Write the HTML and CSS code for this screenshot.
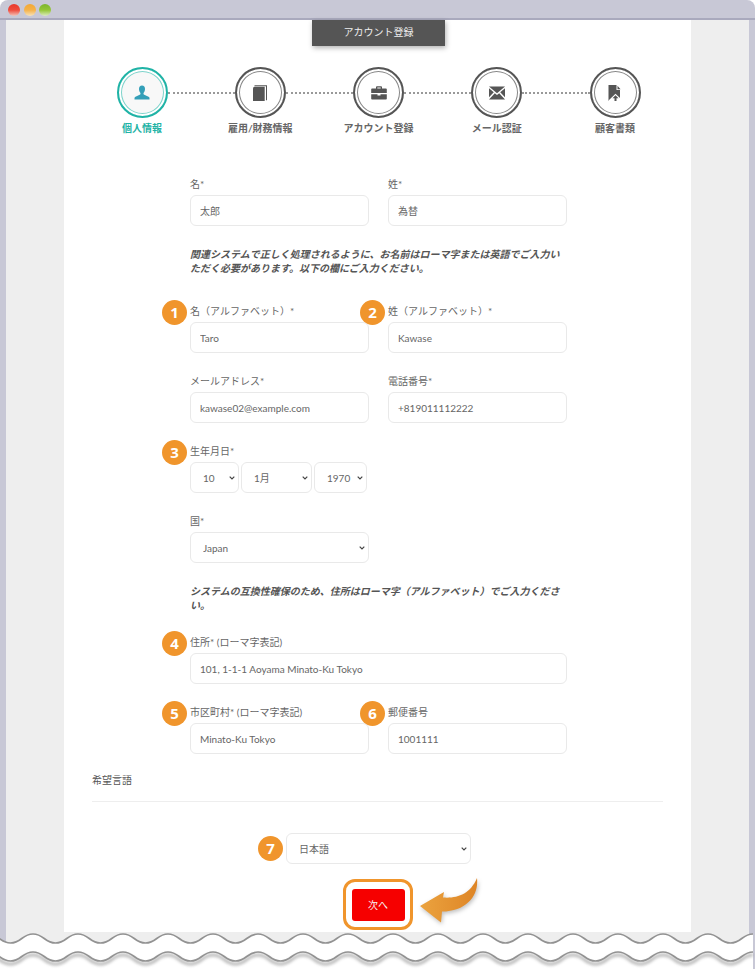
FILE: index.html
```html
<!DOCTYPE html>
<html lang="ja">
<head>
<meta charset="utf-8">
<title>アカウント登録</title>
<link rel="stylesheet" href="styles.css">
</head>
<body>
<div class="window">
  <div class="titlebar">
    <span class="light red"></span><span class="light orange"></span><span class="light green"></span>
  </div>
  <div class="content">
    <main class="page">
      <div class="tab">アカウント登録</div>
      <ol class="steps">
        <li class="step active">
          <span class="circle"><svg viewBox="0 0 16 16" class="icon"><path d="M8 .5c2 0 3 1.500 3 3.500 0 1.500-.6 3-1.300 3.800-.3.400-.3 1.400.1 1.700l4.700 2.300c.6.300 1 .7 1 1.500v1.200H.5v-1.200c0-.8.400-1.200 1-1.500l4.700-2.300c.4-.3.400-1.300.1-1.700C5.600 7 5 5.500 5 4c0-2 1-3.500 3-3.500z"/></svg></span>
          <span class="step-label">個人情報</span>
        </li>
        <li class="line"></li>
        <li class="step">
          <span class="circle"><svg viewBox="0 0 16 16" class="icon"><path d="M2.500.3H15v15h-1V1.300H2.500z"/><path d="M1 3.300q0-1.500 1.500-1.500h10.200V16H1z"/></svg></span>
          <span class="step-label">雇用/財務情報</span>
        </li>
        <li class="line"></li>
        <li class="step">
          <span class="circle"><svg viewBox="0 0 16 16" class="icon"><path d="M5 3.500V2c0-.5.4-.8 1-.8h4c.6 0 1 .3 1 .8v1.500h4c.5 0 .8.300.8.800V8H.2V4.300c0-.5.3-.8.800-.8zm1.300 0h3.400v-1H6.300z"/><path d="M.2 9.200h6.300v1.300h3V9.200h6.300v4.500c0 .5-.3.800-.8.800H1c-.5 0-.8-.3-.8-.8z"/></svg></span>
          <span class="step-label">アカウント登録</span>
        </li>
        <li class="line"></li>
        <li class="step">
          <span class="circle"><svg viewBox="0 0 16 16" class="icon"><path d="M0 1.500h16L8 8.300z"/><path d="M0 3.200 4.800 7.300 0 12.300zM16 3.200 11.200 7.300 16 12.300zM5.800 8.200 8 10l2.200-1.800 5.800 6.300H0z"/></svg></span>
          <span class="step-label">メール認証</span>
        </li>
        <li class="line"></li>
        <li class="step">
          <span class="circle"><svg viewBox="0 0 16 16" class="icon"><path d="M1.500 0h8v5H13v11H1.500z"/><path d="M10.500.8 13.500 4.200h-3z"/><path class="cut" d="M1.500 15.500 8.500 8.800 13 13v3H1.500z"/><path d="M8.500 10.300l3 3h-2V16h-2v-2.700h-2z"/></svg></span>
          <span class="step-label">顧客書類</span>
        </li>
      </ol>

      <form class="form">
        <div class="row">
          <div class="field"><label>名*</label><input type="text" value="太郎"></div>
          <div class="field"><label>姓*</label><input type="text" value="為替"></div>
        </div>
        <p class="note">関連システムで正しく処理されるように、お名前はローマ字または英語でご入力いただく必要があります。以下の欄にご入力ください。</p>
        <div class="row">
          <div class="field"><span class="badge">1</span><label>名（アルファベット）*</label><input type="text" value="Taro"></div>
          <div class="field"><span class="badge">2</span><label>姓（アルファベット）*</label><input type="text" value="Kawase"></div>
        </div>
        <div class="row">
          <div class="field"><label>メールアドレス*</label><input type="text" value="kawase02@example.com"></div>
          <div class="field"><label>電話番号*</label><input type="text" value="+819011112222"></div>
        </div>
        <div class="row">
          <div class="field"><span class="badge">3</span><label>生年月日*</label>
            <div class="dob">
              <select class="day"><option>10</option></select>
              <select class="month"><option>1月</option></select>
              <select class="year"><option>1970</option></select>
            </div>
          </div>
        </div>
        <div class="row">
          <div class="field half"><label>国*</label><select class="country"><option>Japan</option></select></div>
        </div>
        <p class="note tight">システムの互換性確保のため、住所はローマ字（アルファベット）でご入力ください。</p>
        <div class="row">
          <div class="field"><span class="badge">4</span><label>住所* (ローマ字表記)</label><input type="text" value="101, 1-1-1 Aoyama Minato-Ku Tokyo"></div>
        </div>
        <div class="row">
          <div class="field"><span class="badge">5</span><label>市区町村* (ローマ字表記)</label><input type="text" value="Minato-Ku Tokyo"></div>
          <div class="field"><span class="badge">6</span><label>郵便番号</label><input type="text" value="1001111"></div>
        </div>
      </form>

      <section class="language">
        <h2>希望言語</h2>
        <div class="lang-row">
          <span class="badge">7</span>
          <select class="lang"><option>日本語</option></select>
        </div>
        <div class="actions">
          <div class="highlight"><button type="button">次へ</button></div>
          <svg class="arrow" viewBox="0 0 60 50">
            <defs>
              <linearGradient id="ag" x1="0" y1="0" x2="1" y2="0"><stop offset="0" stop-color="#eba33f"/><stop offset="1" stop-color="#de8526"/></linearGradient>
            </defs>
            <path fill="url(#ag)" d="M2 31 26 17l-1 5.500c14 1 27-3 34-19.500 2 17-10 33-35 33.500l-1 11z"/>
          </svg>
        </div>
      </section>
    </main>
  </div>
</div>
<svg class="tear" viewBox="0 0 755 39">
  <defs>
    <filter id="blur" x="-5%" y="-100%" width="110%" height="300%"><feGaussianBlur stdDeviation="1.800"/></filter>
    <path id="wave" d="M-12 4c11 0 11.500 9 22.500 9s11.500-9 22.500-9c11 0 11.500 9 22.500 9s11.500-9 22.500-9c11 0 11.500 9 22.500 9s11.500-9 22.500-9c11 0 11.500 9 22.500 9s11.500-9 22.500-9c11 0 11.500 9 22.500 9s11.500-9 22.500-9c11 0 11.500 9 22.500 9s11.500-9 22.500-9c11 0 11.500 9 22.500 9s11.500-9 22.500-9c11 0 11.500 9 22.500 9s11.500-9 22.500-9c11 0 11.500 9 22.500 9s11.500-9 22.500-9c11 0 11.500 9 22.500 9s11.500-9 22.500-9c11 0 11.500 9 22.500 9s11.500-9 22.500-9c11 0 11.500 9 22.500 9s11.500-9 22.500-9c11 0 11.500 9 22.500 9s11.500-9 22.500-9c11 0 11.500 9 22.500 9s11.500-9 22.500-9c11 0 11.500 9 22.500 9s11.500-9 22.500-9c11 0 11.500 9 22.500 9s11.500-9 22.500-9c11 0 11.500 9 22.500 9s11.500-9 22.500-9"/>
  </defs>
  <path class="sheet" d="M-12 4c11 0 11.500 9 22.500 9s11.500-9 22.500-9c11 0 11.500 9 22.500 9s11.500-9 22.500-9c11 0 11.500 9 22.500 9s11.500-9 22.500-9c11 0 11.500 9 22.500 9s11.500-9 22.500-9c11 0 11.500 9 22.500 9s11.500-9 22.500-9c11 0 11.500 9 22.500 9s11.500-9 22.500-9c11 0 11.500 9 22.500 9s11.500-9 22.500-9c11 0 11.500 9 22.500 9s11.500-9 22.500-9c11 0 11.500 9 22.500 9s11.500-9 22.500-9c11 0 11.500 9 22.500 9s11.500-9 22.500-9c11 0 11.500 9 22.500 9s11.500-9 22.500-9c11 0 11.500 9 22.500 9s11.500-9 22.500-9c11 0 11.500 9 22.500 9s11.500-9 22.500-9c11 0 11.500 9 22.500 9s11.500-9 22.500-9c11 0 11.500 9 22.500 9s11.500-9 22.500-9c11 0 11.500 9 22.500 9s11.500-9 22.500-9c11 0 11.500 9 22.500 9s11.500-9 22.500-9V39H-12z"/>
  <use href="#wave" class="wave"/>
  <use href="#wave" class="wave shade" filter="url(#blur)" y="21"/>
  <use href="#wave" class="wave" y="18"/>
</svg>
</body>
</html>
```

FILE: styles.css
```css
* { box-sizing: border-box; }
html, body { margin: 0; height: 100%; background: #fff; }
body {
  position: relative;
  width: 755px;
  height: 969px;
  overflow: hidden;
  font-family: Lato, "Noto Sans CJK JP", sans-serif;
  font-size: 10px;
  color: #555;
}
.window {
  height: 969px;
  background: #c8c8d6;
  border-radius: 8px 8px 0 0;
  padding: 0 6px;
  display: flex;
  flex-direction: column;
}
.titlebar {
  height: 20px;
  flex: none;
  margin: 0 -6px;
  padding: 4px 0 0 8px;
  display: flex;
  gap: 3.600px;
  border-bottom: 2px solid #a9a9bd;
}
.light { width: 12px; height: 12px; border-radius: 50%; }
.red { background: linear-gradient(#e9372c 0, #ef4a3c 50%, #f3c4bb 100%); }
.orange { background: linear-gradient(#f2a835 0, #f5b24a 50%, #f7e2bb 100%); }
.green { background: linear-gradient(#7cb52c 0, #94c636 50%, #dcebc0 100%); }
.content {
  flex: 1;
  background: #eee;
  padding: 0 58px;
}
.page {
  background: #fff;
  height: 912px;
  position: relative;
}
.tab {
  width: 133px;
  height: 26px;
  margin-left: 248px;
  background: #555;
  color: #eee;
  font-size: 10px;
  line-height: 25px;
  text-align: center;
  box-shadow: 1px 2px 5px rgba(0, 0, 0, .3);
}
.steps {
  list-style: none;
  margin: 21px 0 0;
  padding: 0 50.500px 0 52.500px;
  display: flex;
  align-items: flex-start;
}
.step { width: 51px; flex: none; display: flex; flex-direction: column; align-items: center; }
.line { flex: 1; height: 0; margin-top: 25px; border-top: 2px dotted #999; }
.circle {
  width: 51px;
  height: 51px;
  border-radius: 50%;
  border: 2px solid #555;
  box-shadow: inset 0 0 0 2px #fff, inset 0 0 0 3px #888;
  display: flex;
  align-items: center;
  justify-content: center;
  background: #fff;
}
.icon { width: 16px; height: 16px; fill: #555; display: block; }
.icon .cut { fill: #fff; }
.step.active .circle {
  border-color: #1fb3a6;
  box-shadow: inset 0 0 0 2px #fff, inset 0 0 0 3px #7ed3cb;
  background: #f8f8f8;
}
.step.active .icon { fill: #349fb8; }
.step-label {
  margin-top: 2px;
  white-space: nowrap;
  font-size: 10px;
  line-height: 16px;
  font-weight: 700;
  color: #666;
}
.step.active .step-label { color: #1fb3a6; }
.form { margin: 41px 0 0 126px; width: 377px; }
.row { display: flex; gap: 19px; margin-bottom: 21px; }
.field { flex: 1; min-width: 0; position: relative; }
.field.half { flex: none; width: 179px; }
.field label { display: block; height: 18px; line-height: 15px; font-size: 10px; color: #666; }
input, select {
  display: block;
  width: 100%;
  height: 31px;
  border: 1px solid #e9e9e9;
  border-radius: 6px;
  background: #fff;
  font: inherit;
  color: #666;
  outline: none;
}
input { padding: 0 9px; }
select {
  appearance: none;
  padding: 0 10px 0 12px;
  background-image: url("data:image/svg+xml,%3Csvg xmlns='http://www.w3.org/2000/svg' width='6' height='4' viewBox='0 0 6 4'%3E%3Cpath d='M.7.7 3 3 5.300.7' fill='none' stroke='%23444' stroke-width='1.200'/%3E%3C/svg%3E");
  background-repeat: no-repeat;
  background-position: right 3px center;
  background-size: 6px 4px;
}
.dob { display: flex; gap: 2px; }
.day { width: 49px; }
.month { width: 71px; }
.year { width: 53px; }
.note {
  margin: 1px 0 29px;
  font-size: 10px;
  line-height: 14px;
  font-weight: 700;
  font-style: italic;
  color: #555;
}
.note.tight { margin-bottom: 23px; }
.badge {
  position: absolute;
  left: -28px;
  top: -4.500px;
  width: 25px;
  height: 25px;
  border-radius: 50%;
  background: #f0952c;
  color: #fff;
  font-family: "Open Sans", sans-serif;
  font-weight: 700;
  font-size: 15px;
  line-height: 25px;
  text-align: center;
}
.language { margin: -1px 28px 0; }
.language h2 {
  margin: 0;
  padding-bottom: 14px;
  border-bottom: 1px solid #eee;
  font-size: 10px;
  line-height: 13px;
  font-weight: 400;
  color: #555;
}
.lang-row { position: relative; width: 185px; margin: 31px 0 0 194px; }
.lang-row .badge { left: -28px; top: 3px; }
.actions {
  position: relative;
  margin-top: 15px;
  display: flex;
  justify-content: center;
}
.highlight {
  width: 70px;
  height: 51px;
  margin-left: 1px;
  border: 3px solid #f0952c;
  border-radius: 12px;
  display: flex;
  align-items: center;
  justify-content: center;
}
button {
  width: 53px;
  height: 32px;
  border: 0;
  border-radius: 3px;
  background: #f60000;
  color: #f5f5f5;
  font: inherit;
  padding: 0;
}
.arrow {
  position: absolute;
  left: 326px;
  top: -4px;
  width: 60px;
  height: 50px;
  filter: drop-shadow(1px 2px 2px rgba(0, 0, 0, .25));
}
.tear { position: absolute; left: 0; top: 930px; width: 755px; height: 39px; display: block; }
.sheet { fill: #fff; stroke: none; }
.wave { fill: none; stroke: #929292; stroke-width: 1.700; }
.wave.shade { stroke: #888; stroke-width: 3; opacity: .6; }
```
